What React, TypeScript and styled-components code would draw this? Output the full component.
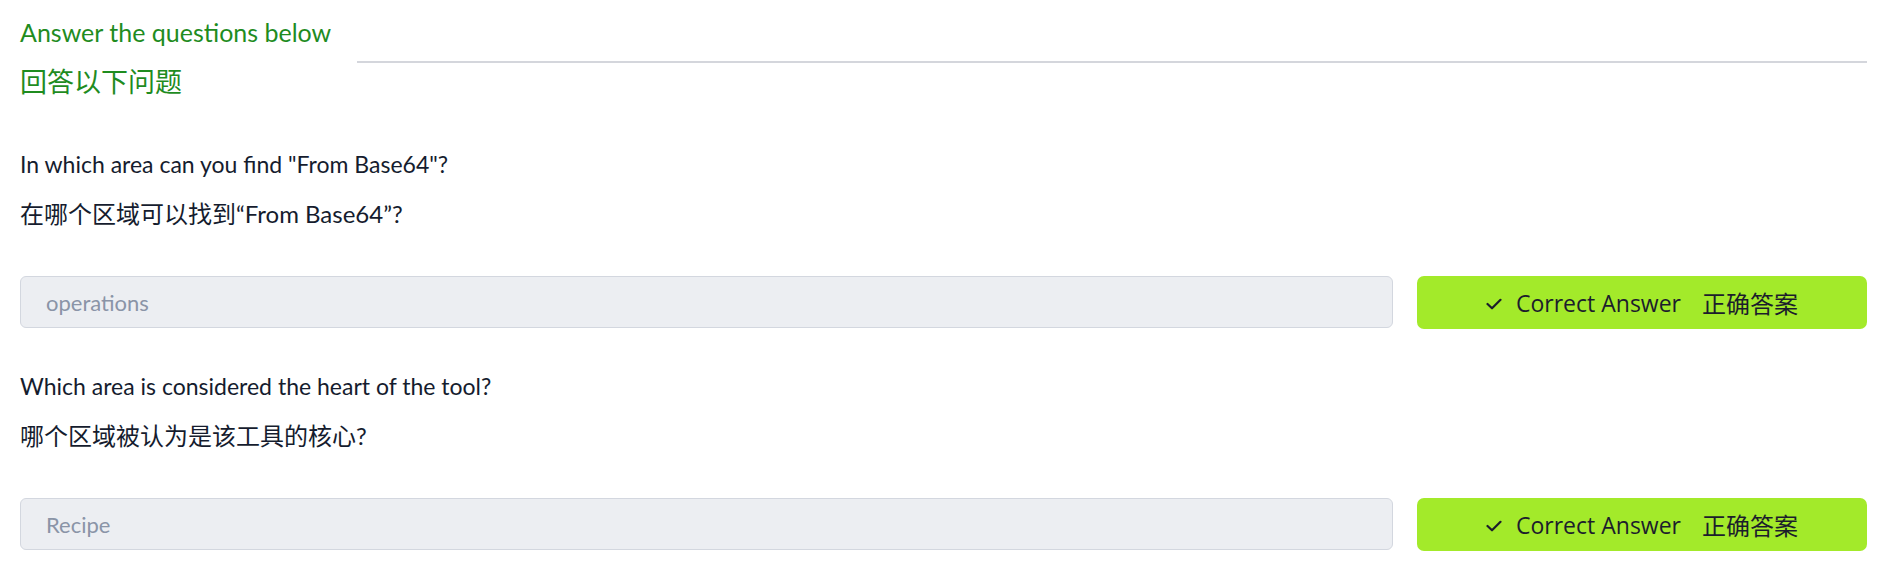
import React from "react";
import styled, { createGlobalStyle } from "styled-components";

const GlobalStyle = createGlobalStyle`
    html, body {
        margin: 0;
        padding: 0;
        background: #ffffff;
    }
    body {
        font-family: "Lato", "Noto Sans CJK SC", sans-serif;
        color: #151c2e;
    }
`;

const Page = styled.div`
    padding: 16px 21px 0 20px;
    display: flex;
    flex-direction: column;
`;

const Header = styled.div`
    display: flex;
    align-items: flex-start;
    gap: 26px;
`;

const TitleBlock = styled.div`
    display: flex;
    flex-direction: column;
    color: #1f8c1f;
`;

const Title = styled.div`
    font-size: 25px;
    line-height: 32px;
    white-space: nowrap;
`;

const TitleZh = styled.div`
    font-family: "Noto Sans CJK SC", sans-serif;
    font-size: 27px;
    line-height: 40px;
    margin-top: 13px;
    white-space: nowrap;
`;

const Rule = styled.div`
    flex: 1;
    height: 2px;
    margin-top: 45px;
    background: #d4d6dc;
`;

const Question = styled.div`
    display: flex;
    flex-direction: column;
    margin-top: ${({ $first }: { $first?: boolean }) => ($first ? "47px" : "41px")};
`;

const QText = styled.p`
    margin: 0;
    font-size: 23px;
    line-height: 32px;
    color: #151c2e;
`;

const QTextZh = styled.p`
    margin: 16px 0 0;
    font-size: 24px;
    line-height: 36px;
    color: #151c2e;
`;

const AnswerRow = styled.div`
    display: flex;
    gap: 24px;
    margin-top: 44px;
`;

const AnswerField = styled.div`
    flex: 1;
    height: 50px;
    box-sizing: content-box;
    border: 1px solid #d3d7df;
    border-radius: 6px;
    background: #eceef2;
    display: flex;
    align-items: center;
    padding-left: 25px;
    font-size: 22px;
    color: #8a94a7;
`;

const CorrectButton = styled.div`
    width: 450px;
    height: 53px;
    border-radius: 7px;
    background: #a3ea2a;
    display: flex;
    align-items: center;
    justify-content: center;
    color: #1c1d2c;
    font-family: "Open Sans", sans-serif;
    font-size: 23px;
`;

const CheckIcon = styled.svg`
    width: 16px;
    height: 12px;
    margin-right: 14px;
    margin-top: 2px;
`;

const ZhLabel = styled.span`
    font-family: "Noto Sans CJK SC", sans-serif;
    font-size: 24px;
    margin-left: 21px;
`;

const questions = [
    {
        en: 'In which area can you find "From Base64"?',
        zh: "在哪个区域可以找到“From Base64”?",
        answer: "operations",
    },
    {
        en: "Which area is considered the heart of the tool?",
        zh: "哪个区域被认为是该工具的核心?",
        answer: "Recipe",
    },
];

export default function App() {
    return (
        <>
            <GlobalStyle />
            <Page>
                <Header>
                    <TitleBlock>
                        <Title>Answer the questions below</Title>
                        <TitleZh>回答以下问题</TitleZh>
                    </TitleBlock>
                    <Rule />
                </Header>
                {questions.map((q, i) => (
                    <Question key={q.answer} $first={i === 0}>
                        <QText>{q.en}</QText>
                        <QTextZh>{q.zh}</QTextZh>
                        <AnswerRow>
                            <AnswerField>{q.answer}</AnswerField>
                            <CorrectButton>
                                <CheckIcon viewBox="0 0 16 12">
                                    <path
                                        d="M1.5 6 L6 10.3 L14.5 1.8"
                                        fill="none"
                                        stroke="#1c1d2c"
                                        strokeWidth="2.2"
                                        strokeLinecap="round"
                                        strokeLinejoin="round"
                                    />
                                </CheckIcon>
                                <span>Correct Answer</span>
                                <ZhLabel>正确答案</ZhLabel>
                            </CorrectButton>
                        </AnswerRow>
                    </Question>
                ))}
            </Page>
        </>
    );
}
